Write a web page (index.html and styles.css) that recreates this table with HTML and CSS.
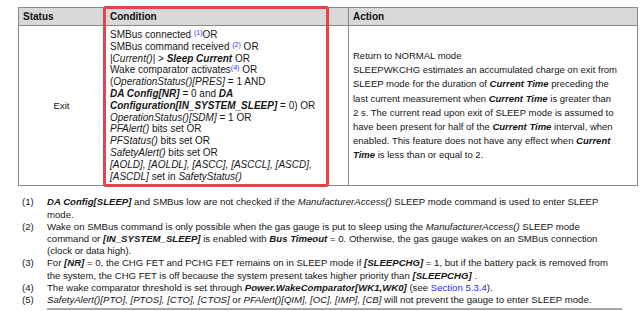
FILE: index.html
```html
<!DOCTYPE html>
<html>
<head>
<meta charset="utf-8">
<link rel="stylesheet" href="styles.css">
</head>
<body>
<div class="page">
  <div class="table-wrap">
    <table class="modes">
      <colgroup>
        <col class="c-status">
        <col class="c-cond">
        <col class="c-action">
      </colgroup>
      <thead>
        <tr><th>Status</th><th class="th-cond">Condition</th><th class="th-action">Action</th></tr>
      </thead>
      <tbody>
        <tr>
          <td class="status">Exit</td>
          <td class="cond">
            SMBus connected <sup class="ref">(1)</sup>OR<br>
            SMBus command received <sup class="ref">(2)</sup> OR<br>
            |<i>Current()</i>| &gt; <b><i>Sleep Current</i></b> OR<br>
            Wake comparator activates<sup class="ref">(4)</sup> OR<br>
            (<i>OperationStatus()[PRES]</i> = 1 AND<br>
            <b><i>DA Config[NR]</i></b> = 0 and <b><i>DA</i></b><br>
            <b><i>Configuration[IN_SYSTEM_SLEEP]</i></b> = 0) OR<br>
            <i>OperationStatus()[SDM]</i> = 1 OR<br>
            <i>PFAlert()</i> bits set OR<br>
            <i>PFStatus()</i> bits set OR<br>
            <i>SafetyAlert()</i> bits set OR<br>
            <i>[AOLD], [AOLDL], [ASCC], [ASCCL], [ASCD],</i><br>
            <i>[ASCDL]</i> set in <i>SafetyStatus()</i>
          </td>
          <td class="action">
            Return to NORMAL mode<br>
            SLEEPWKCHG estimates an accumulated charge on exit from<br>
            SLEEP mode for the duration of <b><i>Current Time</i></b> preceding the<br>
            last current measurement when <b><i>Current Time</i></b> is greater than<br>
            2 s. The current read upon exit of SLEEP mode is assumed to<br>
            have been present for half of the <b><i>Current Time</i></b> interval, when<br>
            enabled. This feature does not have any effect when <b><i>Current</i></b><br>
            <b><i>Time</i></b> is less than or equal to 2.
          </td>
        </tr>
      </tbody>
    </table>
    <div class="highlight"></div>
  </div>

  <div class="notes">
    <span class="num">(1)</span>
    <span class="txt"><b><i>DA Config[SLEEP]</i></b> and SMBus low are not checked if the <i>ManufacturerAccess()</i> SLEEP mode command is used to enter SLEEP<br>mode.</span>
    <span class="num">(2)</span>
    <span class="txt">Wake on SMBus command is only possible when the gas gauge is put to sleep using the <i>ManufacturerAccess()</i> SLEEP mode<br>command or <b><i>[IN_SYSTEM_SLEEP]</i></b> is enabled with <b><i>Bus Timeout</i></b> = 0. Otherwise, the gas gauge wakes on an SMBus connection<br>(clock or data high).</span>
    <span class="num">(3)</span>
    <span class="txt">For <b><i>[NR]</i></b> = 0, the CHG FET and PCHG FET remains on in SLEEP mode if <b><i>[SLEEPCHG]</i></b> = 1, but if the battery pack is removed from<br>the system, the CHG FET is off because the system present takes higher priority than <b><i>[SLEEPCHG]</i></b> .</span>
    <span class="num">(4)</span>
    <span class="txt">The wake comparator threshold is set through <b><i>Power.WakeComparator[WK1,WK0]</i></b> (see <span class="link">Section 5.3.4</span>).</span>
    <span class="num">(5)</span>
    <span class="txt"><i>SafetyAlert()[PTO], [PTOS], [CTO], [CTOS]</i> or <i>PFAlert()[QIM], [OC], [IMP], [CB]</i> will not prevent the gauge to enter SLEEP mode.</span>
  </div>
  <div class="rule"></div>
</div>
</body>
</html>
```

FILE: styles.css
```css
html, body {
  margin: 0;
  padding: 0;
  background: #ffffff;
}

body {
  font-family: "Liberation Sans", Arial, sans-serif;
  font-size: 9.5px;
  color: #161616;
}

.page {
  padding: 7px 0 0 18px;
}

.table-wrap {
  position: relative;
  width: 619px;
}

.modes {
  border-collapse: collapse;
  table-layout: fixed;
  width: 619px;
}

.c-status { width: 86px; }
.c-cond { width: 244px; }
.c-action { width: 289px; }

.modes th,
.modes td {
  border: 1px solid #8a8a8a;
}

.modes th {
  background: #d9d9d9;
  height: 17px;
  padding: 0 4px;
  text-align: left;
  font-weight: bold;
  font-size: 10px;
  color: #111;
}

.modes .th-cond {
  padding-left: 5px;
}

.status {
  text-align: center;
  vertical-align: middle;
}

.cond {
  vertical-align: top;
  font-size: 10px;
  line-height: 11.8px;
  padding: 3px 5px 3px 5px;
  white-space: nowrap;
}

.action {
  vertical-align: middle;
  line-height: 14.1px;
  padding: 0 4px;
  white-space: nowrap;
}

.ref {
  font-size: 7px;
  color: #3535ff;
  vertical-align: 3px;
  line-height: 0;
}

.highlight {
  position: absolute;
  left: 85px;
  top: -1px;
  width: 226px;
  height: 181px;
  box-sizing: border-box;
  border: 3px solid #e8434b;
  border-radius: 3px;
  pointer-events: none;
}

.notes {
  display: grid;
  grid-template-columns: 25px auto;
  padding-left: 4px;
  margin-top: 10px;
  font-size: 9.6px;
  line-height: 12.2px;
  white-space: nowrap;
}

.link {
  color: #2b2bff;
}

.rule {
  margin: 2px 0 0 29px;
  width: 575px;
  height: 0;
  border-top: 2px solid #a6a6a6;
  box-shadow: 0 1px 1px #d0d0d0;
}
```
